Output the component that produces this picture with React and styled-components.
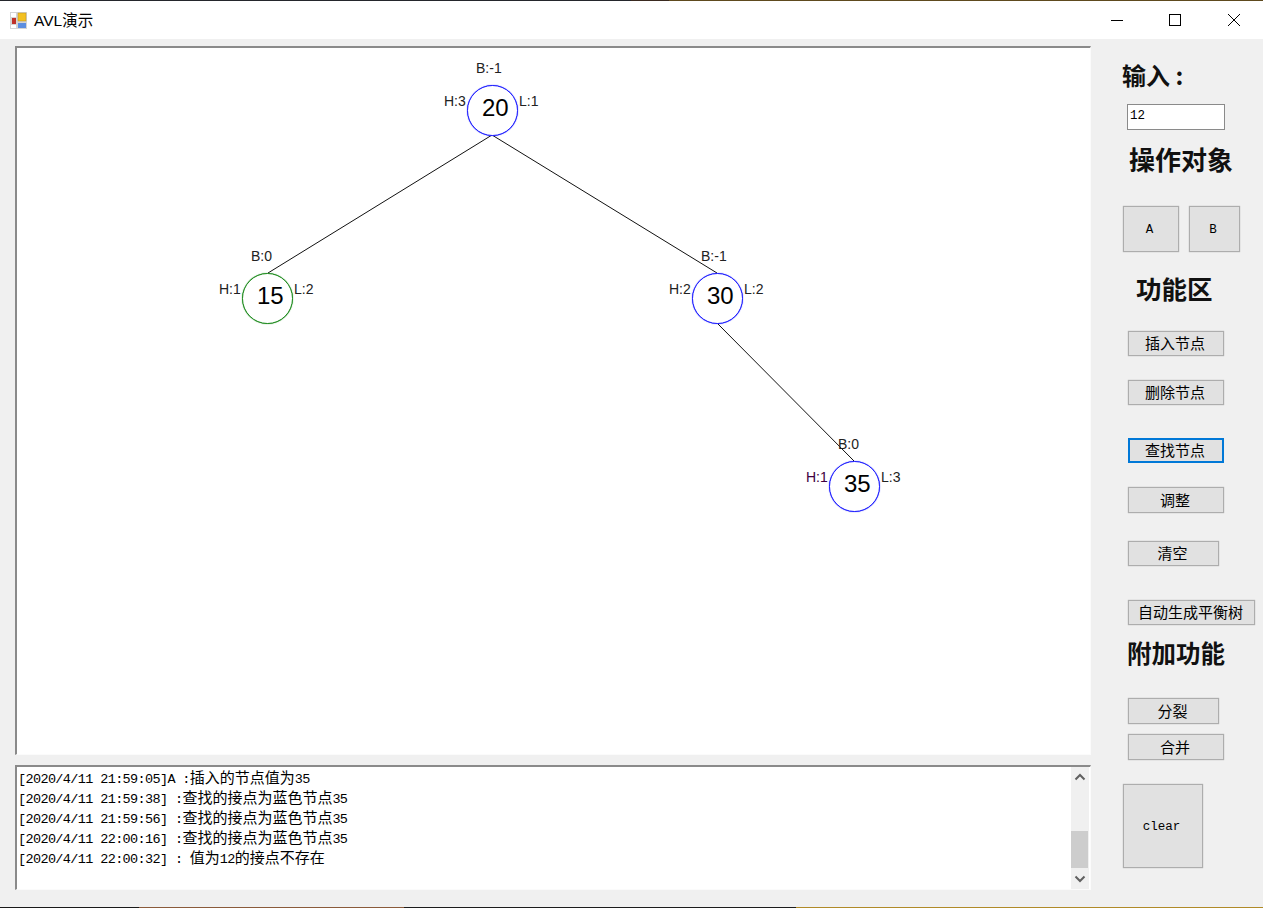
import React from "react";
import styled, { createGlobalStyle } from "styled-components";

const Global = createGlobalStyle`
	html, body {
		margin: 0;
		padding: 0;
		background: #f0f0f0;
	}
`;

const CJK = `"Noto Sans CJK SC", "Liberation Sans", sans-serif`;

const Win = styled.div`
	width: 1263px;
	height: 908px;
	display: flex;
	flex-direction: column;
	overflow: hidden;
	background: #f0f0f0;
`;

const TopEdge = styled.div`
	height: 1px;
	flex: none;
	background: linear-gradient(90deg, #24262c 0 50%, #3a2a20 50% 53%, #5e4a1e 53% 100%);
`;

const BottomEdge = styled.div`
	height: 1px;
	flex: none;
	background: linear-gradient(90deg, #1a1a1a 0 11%, #8a5a3a 11% 32%, #1c1c1c 32% 63%, #b08a28 63% 100%);
`;

const TitleBar = styled.div`
	height: 38px;
	flex: none;
	background: #fff;
	display: flex;
	align-items: center;
	padding-left: 10px;
`;

const Title = styled.span`
	font-family: "Liberation Sans", "Noto Sans CJK SC", sans-serif;
	font-size: 15.5px;
	color: #000;
	margin-left: 7px;
	margin-top: -3px;
`;

const WinButtons = styled.div`
	margin-left: auto;
	display: flex;
`;

const WinButton = styled.div`
	width: 58.5px;
	height: 38px;
	display: flex;
	align-items: center;
	justify-content: center;
`;

const Body = styled.div`
	flex: 1;
	display: flex;
	min-height: 0;
`;

const LeftCol = styled.div`
	width: 1076px;
	margin-left: 15px;
	padding-top: 7px;
	display: flex;
	flex-direction: column;
	gap: 10px;
`;

const Sunken = styled.div`
	box-sizing: border-box;
	background: #fff;
	border-top: 2px solid #8a8a8a;
	border-left: 2px solid #8a8a8a;
	border-right: 1px solid #fbfbfb;
	border-bottom: 1px solid #fbfbfb;
`;

const Canvas = styled(Sunken)`
	height: 709px;
	position: relative;
`;

const Edges = styled.svg`
	position: absolute;
	left: -2px;
	top: -2px;
`;

const NodeCircle = styled.div`
	position: absolute;
	left: ${(p) => p.$x - 27.5}px;
	top: ${(p) => p.$y - 27.5}px;
	width: 51px;
	height: 51px;
	box-sizing: border-box;
	border-radius: 50%;
	border: 1px solid ${(p) => p.$color};
	box-shadow: 0 0 1px ${(p) => p.$color};
	background: #fff;
	display: flex;
	align-items: center;
	justify-content: center;
	font-family: "Liberation Sans", sans-serif;
	font-size: 24px;
	color: #000;
	padding: 0 0 4px 6.5px;
`;

const NodeLabel = styled.span`
	position: absolute;
	left: ${(p) => p.$x}px;
	top: ${(p) => p.$y}px;
	font-family: "Liberation Sans", sans-serif;
	font-size: 14px;
	line-height: 16px;
	color: ${(p) => p.$color || "#222"};
`;

const Log = styled(Sunken)`
	height: 125px;
	display: flex;
`;

const LogText = styled.div`
	flex: 1;
	padding: 0 0 0 1px;
`;

const LogLine = styled.div`
	height: 20px;
	line-height: 20px;
	white-space: pre;
	font-family: "Liberation Mono", monospace;
	font-size: 13.5px;
	letter-spacing: -0.63px;
	color: #000;
`;

const Han = styled.span`
	font-family: ${CJK};
	font-size: 15px;
	letter-spacing: 0;
`;

const ScrollBar = styled.div`
	width: 18px;
	margin-right: 1px;
	background: #f0f0f0;
	display: flex;
	flex-direction: column;
`;

const ScrollArrow = styled.div`
	height: 20px;
	flex: none;
	display: flex;
	align-items: center;
	justify-content: center;
`;

const ScrollTrack = styled.div`
	flex: 1;
	padding-top: 44px;
`;

const ScrollThumb = styled.div`
	height: 37px;
	margin-right: 1px;
	background: #cdcdcd;
`;

const Side = styled.div`
	flex: 1;
	padding-left: 32px;
	display: flex;
	flex-direction: column;
	align-items: flex-start;
`;

const Heading = styled.div`
	height: 30px;
	line-height: 26px;
	margin-top: ${(p) => p.$top}px;
	margin-left: ${(p) => p.$left}px;
	font-family: ${CJK};
	font-weight: 700;
	font-size: ${(p) => p.$size}px;
	color: #111;
	white-space: pre;
`;

const InputBox = styled.input`
	box-sizing: border-box;
	width: 98px;
	height: 26px;
	margin: 12px 0 0 4px;
	padding: 0 2px 2px;
	border: 1px solid #8a8a8a;
	outline: none;
	background: #fff;
	font-family: "Liberation Mono", monospace;
	font-size: 12.5px;
	color: #000;
`;

const Btn = styled.button`
	box-sizing: border-box;
	width: ${(p) => p.$w}px;
	height: ${(p) => p.$h || 25}px;
	margin-top: ${(p) => p.$top}px;
	margin-left: ${(p) => p.$left ?? 5}px;
	padding: 0 2px 2px 0;
	background: #e1e1e1;
	border: ${(p) => (p.$focus ? "2px solid #0078d7" : "1px solid #adadad")};
	box-shadow: ${(p) => (p.$focus ? "none" : "0 0 1px #adadad")};
	font-family: ${CJK};
	font-size: 15px;
	line-height: 1;
	color: #000;
	white-space: nowrap;
`;

const MonoBtn = styled(Btn)`
	padding: 2px 3px 0 0;
	font-family: "Liberation Mono", monospace;
	font-size: 12.5px;
`;

const PickRow = styled.div`
	display: flex;
	gap: 10px;
	margin-top: 30px;
`;

const nodes = [
	{ x: 492, y: 110, v: 20, h: 3, l: 1, b: -1, color: "#1c1cff" },
	{ x: 267, y: 298, v: 15, h: 1, l: 2, b: 0, color: "#1c8a1c" },
	{ x: 717, y: 298, v: 30, h: 2, l: 2, b: -1, color: "#1c1cff" },
	{ x: 854, y: 486, v: 35, h: 1, l: 3, b: 0, color: "#1c1cff", hColor: "#400040" },
];

const edges = [
	[492, 135, 268, 273],
	[492, 135, 717, 273],
	[717, 323, 854, 461],
];

const logs = [
	"[2020/4/11 21:59:05]A :插入的节点值为35",
	"[2020/4/11 21:59:38] :查找的接点为蓝色节点35",
	"[2020/4/11 21:59:56] :查找的接点为蓝色节点35",
	"[2020/4/11 22:00:16] :查找的接点为蓝色节点35",
	"[2020/4/11 22:00:32] : 值为12的接点不存在",
];

// page coordinates to canvas coordinates
const OX = 15;
const OY = 46;

const AppIcon = () => (
	<svg width="17" height="17" viewBox="0 0 17 17">
		<rect x="0" y="0" width="17" height="17" fill="#d4d4d4" />
		<rect x="1" y="1" width="5" height="4" fill="#fff" />
		<rect x="1" y="13" width="5" height="3" fill="#fff" />
		<rect x="8" y="1" width="8" height="8" fill="#f3c020" stroke="#b89020" strokeWidth="0.5" />
		<rect x="2" y="6" width="4" height="6" fill="#c03028" />
		<rect x="8" y="11" width="8" height="5" fill="#5c8ee0" />
	</svg>
);

const App = () => {
	return (
		<Win>
			<Global />
			<TopEdge />
			<TitleBar>
				<AppIcon />
				<Title>AVL演示</Title>
				<WinButtons>
					<WinButton>
						<svg width="12" height="12" viewBox="0 0 12 12">
							<path d="M0 6.5H12" stroke="#000" />
						</svg>
					</WinButton>
					<WinButton>
						<svg width="12" height="12" viewBox="0 0 12 12">
							<rect x="0.5" y="0.5" width="11" height="11" fill="none" stroke="#000" />
						</svg>
					</WinButton>
					<WinButton>
						<svg width="12" height="12" viewBox="0 0 12 12">
							<path d="M0 0L12 12M12 0L0 12" stroke="#000" />
						</svg>
					</WinButton>
				</WinButtons>
			</TitleBar>
			<Body>
				<LeftCol>
					<Canvas>
						<Edges width="1076" height="709" viewBox={`${OX} ${OY} 1076 709`}>
							{edges.map(([a, b, c, d], i) => (
								<line key={i} x1={a} y1={b} x2={c} y2={d} stroke="#111" />
							))}
						</Edges>
						{nodes.map((n) => (
							<React.Fragment key={n.v}>
								<NodeCircle $x={n.x - OX} $y={n.y - OY} $color={n.color}>
									{n.v}
								</NodeCircle>
								<NodeLabel $x={n.x - OX - 18} $y={n.y - OY - 52}>
									B:{n.b}
								</NodeLabel>
								<NodeLabel $x={n.x - OX - 50} $y={n.y - OY - 19} $color={n.hColor}>
									H:{n.h}
								</NodeLabel>
								<NodeLabel $x={n.x - OX + 25} $y={n.y - OY - 19}>
									L:{n.l}
								</NodeLabel>
							</React.Fragment>
						))}
					</Canvas>
					<Log>
						<LogText>
							{logs.map((line, i) => (
								<LogLine key={i}>
									{line.split(/([\u4e00-\u9fff]+)/).map((part, j) => (j % 2 ? <Han key={j}>{part}</Han> : part))}
								</LogLine>
							))}
						</LogText>
						<ScrollBar>
							<ScrollArrow>
								<svg width="12" height="8" viewBox="0 0 12 8">
									<path d="M1.5 6.5L6 2L10.5 6.5" fill="none" stroke="#606060" strokeWidth="2" />
								</svg>
							</ScrollArrow>
							<ScrollTrack>
								<ScrollThumb />
							</ScrollTrack>
							<ScrollArrow>
								<svg width="12" height="8" viewBox="0 0 12 8">
									<path d="M1.5 1.5L6 6L10.5 1.5" fill="none" stroke="#606060" strokeWidth="2" />
								</svg>
							</ScrollArrow>
						</ScrollBar>
					</Log>
				</LeftCol>
				<Side>
					<Heading $top={23} $left={-1} $size={24}>输入 :</Heading>
					<InputBox defaultValue="12" />
					<Heading $top={16} $left={6} $size={26}>操作对象</Heading>
					<PickRow>
						<MonoBtn $w={56} $h={46} $top={0} $left={0}>A</MonoBtn>
						<MonoBtn $w={51} $h={46} $top={0} $left={0}>B</MonoBtn>
					</PickRow>
					<Heading $top={23} $left={13} $size={25.5}>功能区</Heading>
					<Btn $w={96} $top={26}>插入节点</Btn>
					<Btn $w={96} $top={24}>删除节点</Btn>
					<Btn $w={96} $top={33} $focus>查找节点</Btn>
					<Btn $w={96} $h={26} $top={24}>调整</Btn>
					<Btn $w={91} $top={28}>清空</Btn>
					<Btn $w={127} $top={34}>自动生成平衡树</Btn>
					<Heading $top={15} $left={4} $size={24.5}>附加功能</Heading>
					<Btn $w={91} $h={26} $top={28}>分裂</Btn>
					<Btn $w={96} $h={26} $top={10}>合并</Btn>
					<MonoBtn $w={80} $h={84} $top={24} $left={0}>clear</MonoBtn>
				</Side>
			</Body>
			<BottomEdge />
		</Win>
	);
};

export default App;
